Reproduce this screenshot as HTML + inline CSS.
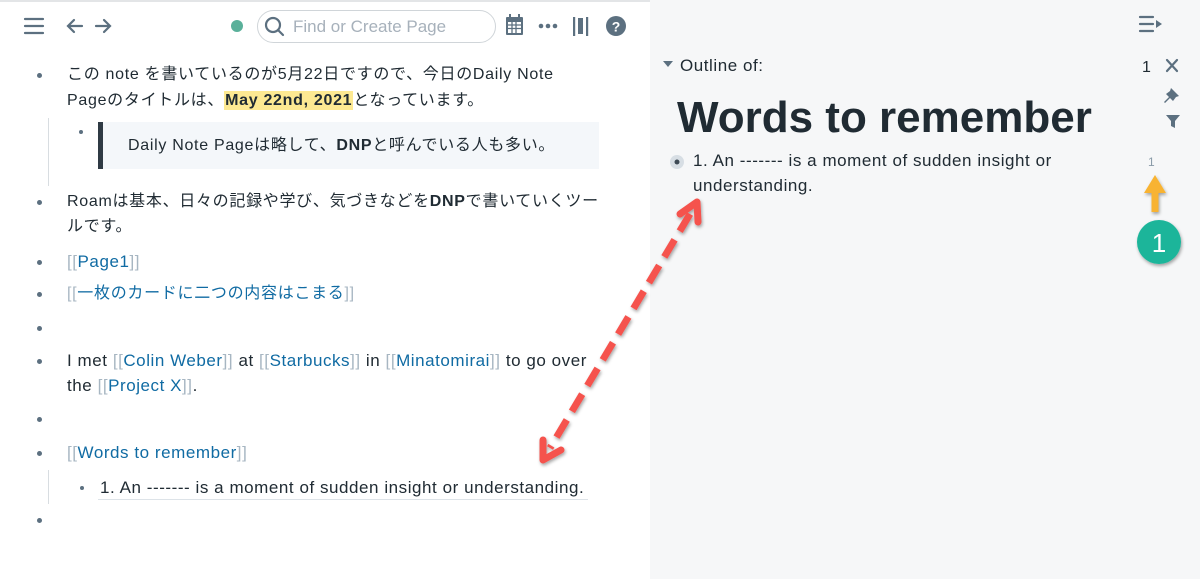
<!DOCTYPE html>
<html><head><meta charset="utf-8"><style>
*{margin:0;padding:0;box-sizing:border-box}
body{width:1200px;height:579px;overflow:hidden;background:#fff;font-family:"Liberation Sans","Noto Sans CJK JP",sans-serif;color:#202b33;position:relative}
.a{position:absolute;white-space:nowrap;font-size:16px;line-height:25px;letter-spacing:0.7px}
.e{font-size:17px;letter-spacing:0.55px}
.b{position:absolute;width:5px;height:5px;border-radius:50%;background:#5c7080}
.l{color:#106ba3}.br{color:#a7b6c2}
.right{position:absolute;left:650px;top:0;width:550px;height:579px;background:#f6f7f8}
</style></head><body>
<div style="position:absolute;left:0;top:0;width:1200px;height:2px;background:#e3e5e7"></div>
<div class="right"></div>
<svg style="position:absolute;left:0;top:0" width="650" height="55">
<g stroke="#5c7080" stroke-width="2.2" fill="none" stroke-linecap="round">
<path d="M25 19h18M25 26h18M25 33h18"/>
<path d="M82 26H68M74 20l-6 6 6 6"/>
<path d="M96 26h14M104 20l6 6-6 6"/>
</g>
<circle cx="237" cy="26" r="6" fill="#5ab09a"/>
<rect x="257.5" y="10.5" width="238" height="32" rx="16" fill="#fff" stroke="#d0d5d9"/>
<g stroke="#5c7080" stroke-width="2.2" fill="none" stroke-linecap="round">
<circle cx="273" cy="25" r="7"/><path d="M278 30l5 5"/></g>
<text x="293" y="32" font-family="Liberation Sans" font-size="17" fill="#a7b1bb">Find or Create Page</text>
<g fill="#5c7080">
<rect x="506" y="17" width="17" height="18" rx="1"/>
<rect x="508" y="22" width="13" height="11" fill="#fff"/>
<path d="M508 25h13M508 28.5h13M512 22v11M516 22v11" stroke="#5c7080" stroke-width="1.3"/>
<rect x="509" y="14" width="2" height="5"/><rect x="518" y="14" width="2" height="5"/>
<circle cx="541" cy="26" r="2.3"/><circle cx="548" cy="26" r="2.3"/><circle cx="555" cy="26" r="2.3"/>
<rect x="573" y="17" width="2.2" height="19"/><rect x="578" y="18" width="5" height="16"/><rect x="586" y="17" width="2.2" height="19"/>
<circle cx="616" cy="26" r="10"/>
</g>
<text x="616" y="31.5" text-anchor="middle" font-family="Liberation Sans" font-weight="bold" font-size="14" fill="#fff">?</text>
</svg>
<div class="b" style="left:37px;top:73px"></div>
<div class="a" style="left:67px;top:62px">この note を書いているのが5月22日ですので、今日のDaily Note</div>
<div class="a" style="left:67px;top:88px">Pageのタイトルは、<b style="background:#fde992;padding:1px 1px">May 22nd, 2021</b>となっています。</div>
<div style="position:absolute;left:48px;top:118px;width:1px;height:68px;background:#d8dde1"></div>
<div class="b" style="left:79px;top:130px;width:4px;height:4px"></div>
<div style="position:absolute;left:98px;top:122px;width:501px;height:47px;background:#f4f7fa;border-left:5px solid #2f3a44"></div>
<div class="a" style="left:128px;top:133px">Daily Note Pageは略して、<b>DNP</b>と呼んでいる人も多い。</div>
<div class="b" style="left:37px;top:200px"></div>
<div class="a" style="left:67px;top:189px">Roamは基本、日々の記録や学び、気づきなどを<b>DNP</b>で書いていくツー</div>
<div class="a" style="left:67px;top:214px">ルです。</div>
<div class="b" style="left:37px;top:260px"></div>
<div class="a e" style="left:67px;top:249px"><span class="br">[[</span><span class="l">Page1</span><span class="br">]]</span></div>
<div class="b" style="left:37px;top:292px"></div>
<div class="a" style="left:67px;top:281px"><span class="br">[[</span><span class="l">一枚のカードに二つの内容はこまる</span><span class="br">]]</span></div>
<div class="b" style="left:37px;top:326px"></div>
<div class="b" style="left:37px;top:359px"></div>
<div class="a e" style="left:67px;top:348px">I met <span class="br">[[</span><span class="l">Colin Weber</span><span class="br">]]</span> at <span class="br">[[</span><span class="l">Starbucks</span><span class="br">]]</span> in <span class="br">[[</span><span class="l">Minatomirai</span><span class="br">]]</span> to go over</div>
<div class="a e" style="left:67px;top:373px">the <span class="br">[[</span><span class="l">Project X</span><span class="br">]]</span>.</div>
<div class="b" style="left:37px;top:417px"></div>
<div class="b" style="left:37px;top:451px"></div>
<div class="a e" style="left:67px;top:440px"><span class="br">[[</span><span class="l">Words to remember</span><span class="br">]]</span></div>
<div style="position:absolute;left:48px;top:470px;width:1px;height:34px;background:#d8dde1"></div>
<div class="b" style="left:80px;top:486px;width:4px;height:4px"></div>
<div class="a e" style="left:100px;top:475px">1. An ------- is a moment of sudden insight or understanding.</div>
<div style="position:absolute;left:98px;top:499px;width:490px;height:1px;background:#dde3e8"></div>
<div class="b" style="left:37px;top:518px"></div>
<svg style="position:absolute;left:650px;top:0" width="550" height="300">
<g stroke="#5c7080" stroke-width="2.2" stroke-linecap="round" fill="none">
<path d="M490 17h13M490 24h13M490 31h13"/>
<path d="M517 60l10 11M527 60l-10 11"/>
</g>
<path d="M506 20l6 4-6 4z" fill="#5c7080"/>
<path d="M13 61h10l-5 6z" fill="#5c7080"/>
<path d="M521 88l8 8-3 1-3 4-3-3-5 5-1-1 5-5-3-3 4-3z" fill="#5c7080"/>
<path d="M516 115h14l-5 6v7l-4-2v-5z" fill="#5c7080"/>
<circle cx="27" cy="162" r="7" fill="#d7dee4"/><circle cx="27" cy="162" r="2.5" fill="#3e4a55"/>
</svg>
<div class="a e" style="left:680px;top:53px">Outline of:</div>
<div class="a" style="left:1142px;top:55px;font-size:16px">1</div>
<div class="a" style="left:677px;top:90px;font-size:44px;line-height:56px;font-weight:bold;color:#202b33;letter-spacing:0">Words to remember</div>
<div class="a e" style="left:693px;top:148px">1. An ------- is a moment of sudden insight or</div>
<div class="a e" style="left:693px;top:173px">understanding.</div>
<div class="a" style="left:1148px;top:150px;font-size:12px;color:#8a9ba8">1</div>
<svg style="position:absolute;left:0;top:0" width="1200" height="579">
<defs><filter id="s"><feDropShadow dx="1" dy="2" stdDeviation="1.5" flood-opacity="0.35"/></filter></defs>
<g filter="url(#s)">
<path d="M690 214L550 448" stroke="#f5534d" stroke-width="7" stroke-dasharray="20 10" fill="none"/>
<path d="M680 214L697 202 698 222" stroke="#f5534d" stroke-width="7" fill="none" stroke-linecap="round" stroke-linejoin="round"/>
<path d="M543 440L543 460 561 450" stroke="#f5534d" stroke-width="7" fill="none" stroke-linecap="round" stroke-linejoin="round"/>
<path d="M1155 212v-28" stroke="#f8b331" stroke-width="7" fill="none"/>
<path d="M1144 193l11-18 11 18z" fill="#f8b331"/>
<circle cx="1159" cy="242" r="22" fill="#1bb59a"/>
</g>
<text x="1159" y="252" text-anchor="middle" font-family="Liberation Sans" font-size="26" fill="#fff">1</text>
</svg>
</body></html>
